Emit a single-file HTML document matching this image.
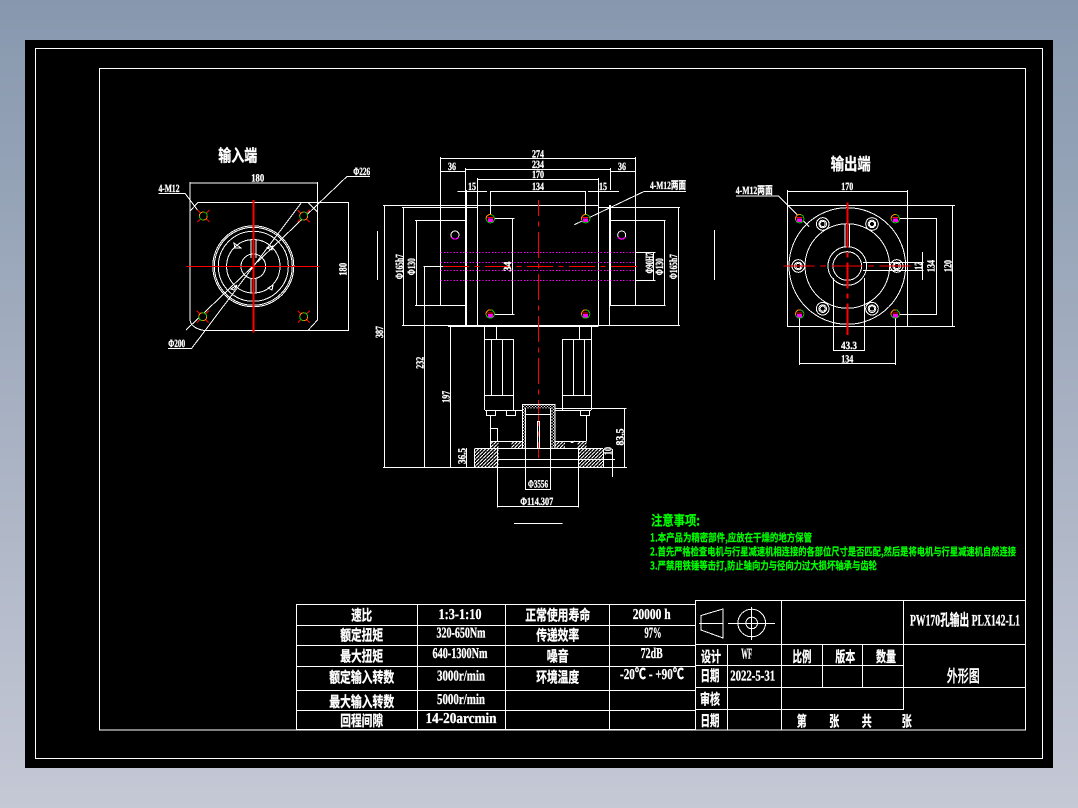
<!DOCTYPE html>
<html><head><meta charset="utf-8"><title>PW170</title>
<style>
html,body{margin:0;padding:0;width:1078px;height:808px;overflow:hidden;background:linear-gradient(#8798ae,#c5c8d5)}
svg{position:absolute;left:0;top:0;display:block;shape-rendering:crispEdges}
text{fill:#fff;stroke:#fff;stroke-width:.3px;font-family:"Liberation Serif","Noto Sans CJK SC",serif;font-size:11px;text-anchor:middle;dominant-baseline:central;text-rendering:geometricPrecision}
.w{stroke:#fff;stroke-width:1;fill:none}
.r{stroke:#f00;stroke-width:1.2;fill:none}
.rv{stroke:#f00;stroke-width:2;fill:none}
.c{font-family:"Noto Sans CJK SC","WenQuanYi Zen Hei",sans-serif;font-size:15px;font-weight:700}
.m{font-size:15px;font-weight:700}
.d{font-size:11px;font-weight:700}
.g{fill:#0f0;stroke:#0f0;stroke-width:.2px;font-family:"Noto Sans CJK SC","WenQuanYi Zen Hei",sans-serif;font-size:11px;font-weight:700;text-anchor:start}
</style></head><body>
<svg width="1078" height="808" viewBox="0 0 1078 808" xmlns="http://www.w3.org/2000/svg">
<defs>
<pattern id="hatch" width="3.5" height="3.5" patternUnits="userSpaceOnUse"><path d="M0 3.5L3.5 0" stroke="#fff" stroke-width="1.2"/></pattern>
<pattern id="cross" width="3" height="3" patternUnits="userSpaceOnUse"><path d="M0 0L3 3M0 3L3 0" stroke="#fff" stroke-width=".9"/></pattern>
<g id="h1"><path d="M-6-6L6 6M-6 6L6-6" stroke="#f00" fill="none"/><circle r="4" fill="#000" stroke="#0c0"/><path d="M-4 0A4 4 0 0 1 0-4" stroke="#f80" fill="none"/><path d="M4 0A4 4 0 0 1 0 4" stroke="#f80" fill="none"/></g>
<g id="h2"><circle r="4.2" fill="#000" stroke="#0c0"/><path d="M-4 1A4 4 0 0 1 1-4" stroke="#f80" fill="none"/><path d="M-3-1H3" stroke="#f00"/><rect x="-2.5" y="0" width="5" height="3.5" fill="#f0f"/></g>
<g id="h3"><circle r="4" fill="#000" stroke="#fff"/><path d="M-3.5 2A4 4 0 0 0 3.5 2" stroke="#f0f" fill="none" stroke-width="1.4"/></g>
<g id="b"><circle r="6.3" class="w"/><circle r="3.8" class="w"/><circle r="2.6" class="w"/></g>
</defs>

<rect x="25" y="40" width="1028" height="728" fill="#000"/>
<rect x="35.5" y="48.5" width="1007" height="710" class="w"/>
<rect x="99.5" y="68.5" width="926" height="661.5" class="w"/>

<!-- LEFT VIEW -->
<path class="w" d="M190 182V320Q191 328 204 330.5H348.5V202.5H198L190 211M317.5 182V320L308 330.5M308 202.5L317.5 212M189.5 183H317.5M348.5 202V331"/>
<circle cx="253.3" cy="266.3" r="40.5" class="w"/><circle cx="253.3" cy="266.3" r="39" class="w"/><circle cx="253.3" cy="266.3" r="35" class="w"/><circle cx="253.3" cy="266.3" r="26.7" class="w"/><circle cx="253.3" cy="266.3" r="12.3" class="w"/>
<path class="w" d="M251 240V258M256 240V258M251 278V293M256 278V293M234 243L235 248H241ZM273 246L272 250L267 248ZM231 289L237 285L234 290ZM272 290L273 285L268 288Z"/>
<path class="w" d="M186 330L346.7 176.7H370M168 348.3H191.7L301.7 202.3M158.3 193.3H185L197.5 210"/>
<path class="r" d="M186 266.5H319"/>
<path class="rv" d="M253.5 200V332.7"/>
<use href="#h1" x="203.3" y="216"/><use href="#h1" x="303.7" y="216"/><use href="#h1" x="202.7" y="316.7"/><use href="#h1" x="303.7" y="316.7"/>

<!-- MAIN TOP -->
<path class="w" d="M440.5 157V305M635.5 157V305M440.5 158.5H635.5M465.5 168V190M610.5 168V190M465.5 169.5H610.5M440.5 171.5H465.5M610.5 171.5H635.5M477.5 178V190M598.5 178V190M477.5 179.5H598.5M490.5 191.5H585.5M457.5 191.5H487M588 191.5H619M490.5 191V219M585.5 191V219"/>
<path class="w" d="M465.5 190V325M466.5 190V325M477.5 190V326M598.5 190V326M609.5 205V325M610.5 205V305M383 205.5H598.5M402 207.5H477.5M598.5 207.5H680M403.5 207V325M678.5 207V325M402 325.5H680M448 326.5H598.5M415 220.5H465.5M416.5 220V305M415 305.5H465.5M610.5 220.5H665.5M664.5 220V305M610 305.5H665.5M423.5 266.5H443M424.5 266V467.5M384.5 205V467.5M450.5 326V467.5M495 218.5H514.5M512.5 218V314M495 314.5H514.5M635.5 252.5H655.5M635.5 280.5H655.5M653.5 252V280M377.5 231V280M714.5 230V280"/>
<path class="w" d="M574.3 224.7L644 191.5H686"/>
<path d="M440.7 252.5H635.7M440.7 262.5H635.7M440.7 270.5H635.7M440.7 280.5H635.7" stroke="#f0f" stroke-width="1" stroke-dasharray="1.4 1.8" fill="none"/>
<path class="r" d="M443 266.5H638" stroke-dasharray="26 5.5 5 5.5"/>
<path class="r" d="M538.5 200V458" stroke-dasharray="26 5.5 5 5.5" stroke-dashoffset="10"/>
<use href="#h2" x="490.3" y="218.7"/><use href="#h2" x="585.7" y="218.7"/><use href="#h2" x="490.3" y="314"/><use href="#h2" x="585.7" y="314"/>
<use href="#h3" x="455" y="235"/><use href="#h3" x="621.7" y="235"/>

<!-- MAIN BOTTOM -->
<rect x="474.5" y="449" width="24" height="18" fill="url(#hatch)"/>
<rect x="578" y="449" width="25" height="18" fill="url(#hatch)"/>
<rect x="490.5" y="441" width="8" height="7.5" fill="url(#hatch)"/>
<rect x="511.5" y="441" width="10.5" height="7.5" fill="url(#hatch)"/>
<rect x="555" y="441" width="10" height="7.5" fill="url(#hatch)"/>
<rect x="577.5" y="441" width="9" height="8" fill="url(#hatch)"/>
<rect x="522.5" y="404.5" width="32.5" height="4" fill="url(#cross)"/>
<rect x="522.5" y="408" width="3" height="40.5" fill="url(#cross)"/>
<rect x="550.5" y="408" width="4.5" height="40.5" fill="url(#cross)"/>
<path class="w" d="M484.5 326V410M496.5 326V339M579.5 326V339M591.5 326V410M484.5 339.5H513.5M513.5 339V410M491.5 339V395M502.5 339V395M562.5 339.5H591.5M562.5 339V410M573.5 339V395M584.5 339V395M484.5 395.5H513.5M562.5 395.5H591.5M485 410.5H522.5M555 408.5H626.5M555 410.5H591M486.5 410V415.5H495.5V410M506.5 410V415.5H515.5V410M580.5 410V415.5H589.5V410M490.5 415V449M586.5 415V441M490.5 428.5H497.5V441M490.5 441.5H522.5M555 441.5H586.5M474.5 448.5H603M474.5 449V467M497.5 448V507.5M578.5 449V507.5M603.5 449V467M497.5 459.5H615M383 467.5H627M497 506.5H578.5M522.5 404.5H555M522.5 404V448M555 404V448M525.5 408V489M550.5 408V489M525.5 414.5H550.5M525 489.5H551M537.5 421V448M539.5 421V448M537.5 421.5H539.5M612.5 449V477M624.5 408V468M466.5 448V467M514 523.5H562.7M570 441Q572 444 575 441"/>

<!-- RIGHT VIEW -->
<path class="w" d="M787.5 190V326.5M907.5 190V326.5M787 205.5H955M787 326.5H955M952.5 205V327M787.5 191.5H907.5M736 196H778.7L809.3 226.7M900 218.5H937M900 314.5H937M936.5 218V315M799.5 314V365M895.5 314V365M799.5 363.5H895.5M833.5 278V351M864.5 278V351M833.5 350.5H864.5M863 262.5H923.5M863 270.5H923.5M922.5 252V280M845 224V247M849.5 224V247"/>
<circle cx="847.3" cy="266" r="58.3" class="w"/><circle cx="847.3" cy="266" r="42.3" class="w"/><circle cx="847.3" cy="266" r="19.3" class="w"/><circle cx="847.3" cy="266" r="14.3" class="w"/>
<use href="#b" x="798.3" y="266"/><use href="#b" x="822.7" y="224"/><use href="#b" x="872" y="224"/><use href="#b" x="896.7" y="266"/><use href="#b" x="822.7" y="308.7"/><use href="#b" x="872" y="308.7"/>
<path class="r" d="M783.3 266H913" stroke-dasharray="31 5.5 6 5.5"/>
<path class="rv" d="M847.5 202.3V335" stroke-dasharray="45 5 5 5 26 5 5 5 40"/>
<use href="#h2" x="799.7" y="218.7"/><use href="#h2" x="895.3" y="218.7"/><use href="#h2" x="799.7" y="314"/><use href="#h2" x="895.3" y="314"/>

<!-- TABLES -->
<path class="w" d="M296.5 605V730M417.5 605V730M505.5 605V730M609.5 605V730M296 604.5H695M296 625.5H695M296 645.5H695M296 666.5H695M296 690.5H695M296 710.5H695M296 729.5H695"/>
<path class="w" d="M695.5 600V730M695 600.5H1025.5M695 644.5H1025.5M695 665.5H903.5M695 687.5H1025.5M695 709.5H903.5M727.5 644V730M781.5 600V730M903.5 600V710M822.5 644V687M862.5 644V687"/>
<path class="w" d="M701 615.5L723 609V638L701 630ZM699 623.5H723M728 623.5H775M751.5 607V640"/>
<circle cx="751.7" cy="623" r="13.8" class="w"/><circle cx="751.7" cy="623" r="5.8" class="w"/>

<!-- TEXT -->
<text class="c" x="237.7" y="154" textLength="39" lengthAdjust="spacingAndGlyphs" style="font-size:17px">输入端</text>
<text class="c" x="850.7" y="162.3" textLength="40" lengthAdjust="spacingAndGlyphs" style="font-size:17px">输出端</text>
<text class="d" x="257.7" y="178.5" textLength="13" lengthAdjust="spacingAndGlyphs">180</text>
<text class="d" x="169" y="189" textLength="21" lengthAdjust="spacingAndGlyphs">4-M12</text>
<text class="d" x="361.7" y="172" textLength="17" lengthAdjust="spacingAndGlyphs">Φ226</text>
<text class="d" x="176.7" y="344" textLength="17" lengthAdjust="spacingAndGlyphs">Φ200</text>
<text class="d" transform="translate(343.3 269.3) rotate(-90)" textLength="13" lengthAdjust="spacingAndGlyphs">180</text>

<text class="d" x="538" y="154.5" textLength="12" lengthAdjust="spacingAndGlyphs">274</text>
<text class="d" x="538" y="165" textLength="12" lengthAdjust="spacingAndGlyphs">234</text>
<text class="d" x="538" y="175" textLength="12" lengthAdjust="spacingAndGlyphs">170</text>
<text class="d" x="538" y="187" textLength="12" lengthAdjust="spacingAndGlyphs">134</text>
<text class="d" x="452" y="167" textLength="8" lengthAdjust="spacingAndGlyphs">36</text>
<text class="d" x="622" y="167" textLength="8" lengthAdjust="spacingAndGlyphs">36</text>
<text class="d" x="472" y="187" textLength="8" lengthAdjust="spacingAndGlyphs">15</text>
<text class="d" x="603" y="187" textLength="8" lengthAdjust="spacingAndGlyphs">15</text>
<text class="d" x="668" y="186" textLength="36" lengthAdjust="spacingAndGlyphs">4-M12两面</text>
<text class="d" transform="translate(400 266.7) rotate(-90)" textLength="25" lengthAdjust="spacingAndGlyphs">Φ165h7</text>
<text class="d" transform="translate(412 266.7) rotate(-90)" textLength="17" lengthAdjust="spacingAndGlyphs">Φ130</text>
<text class="d" transform="translate(508 266.5) rotate(-90)" textLength="10" lengthAdjust="spacingAndGlyphs">34</text>
<text class="d" transform="translate(650 263) rotate(-90)" textLength="21" lengthAdjust="spacingAndGlyphs">Φ90H7</text>
<text class="d" transform="translate(660 266.7) rotate(-90)" textLength="17" lengthAdjust="spacingAndGlyphs">Φ130</text>
<text class="d" transform="translate(674 266.7) rotate(-90)" textLength="25" lengthAdjust="spacingAndGlyphs">Φ165h7</text>
<text class="d" transform="translate(380 332) rotate(-90)" textLength="12" lengthAdjust="spacingAndGlyphs">387</text>
<text class="d" transform="translate(420.7 362.7) rotate(-90)" textLength="12" lengthAdjust="spacingAndGlyphs">232</text>
<text class="d" transform="translate(446.7 396.7) rotate(-90)" textLength="12" lengthAdjust="spacingAndGlyphs">197</text>
<text class="d" transform="translate(462.3 456) rotate(-90)" textLength="16" lengthAdjust="spacingAndGlyphs">36.5</text>
<text class="d" transform="translate(608.7 451) rotate(-90)" textLength="8" lengthAdjust="spacingAndGlyphs">10</text>
<text class="d" transform="translate(620.7 437) rotate(-90)" textLength="17" lengthAdjust="spacingAndGlyphs">83.5</text>
<text class="d" x="538" y="484.3" textLength="20" lengthAdjust="spacingAndGlyphs">Φ3556</text>
<text class="d" x="536.7" y="502" textLength="33" lengthAdjust="spacingAndGlyphs">Φ114.307</text>

<text class="d" x="847.3" y="187" textLength="12" lengthAdjust="spacingAndGlyphs">170</text>
<text class="d" x="754.3" y="191" textLength="37" lengthAdjust="spacingAndGlyphs">4-M12两面</text>
<text class="d" x="847.3" y="359.5" textLength="12" lengthAdjust="spacingAndGlyphs">134</text>
<text class="d" x="849" y="346" textLength="16" lengthAdjust="spacingAndGlyphs">43.3</text>
<text class="d" transform="translate(919 265.7) rotate(-90)" textLength="8" lengthAdjust="spacingAndGlyphs">12</text>
<text class="d" transform="translate(931.7 266) rotate(-90)" textLength="12" lengthAdjust="spacingAndGlyphs">134</text>
<text class="d" transform="translate(948.7 266) rotate(-90)" textLength="12" lengthAdjust="spacingAndGlyphs">120</text>

<text class="g" x="651" y="520.5" textLength="49" lengthAdjust="spacingAndGlyphs" style="font-size:14px">注意事项:</text>
<text class="g" x="650" y="537.5" textLength="162" lengthAdjust="spacingAndGlyphs">1.本产品为精密部件,应放在干燥的地方保管</text>
<text class="g" x="650" y="551.7" textLength="366" lengthAdjust="spacingAndGlyphs">2.首先严格检查电机与行星减速机相连接的各部位尺寸是否匹配,然后是将电机与行星减速机自然连接</text>
<text class="g" x="650" y="565.7" textLength="227" lengthAdjust="spacingAndGlyphs">3.严禁用铁锤等击打,防止轴向力与径向力过大损坏轴承与齿轮</text>

<text class="c" x="361.7" y="615" textLength="21" lengthAdjust="spacingAndGlyphs">速比</text>
<text class="c" x="361.7" y="635" textLength="43" lengthAdjust="spacingAndGlyphs">额定扭矩</text>
<text class="c" x="361.7" y="656" textLength="43" lengthAdjust="spacingAndGlyphs">最大扭矩</text>
<text class="c" x="361.7" y="677" textLength="65" lengthAdjust="spacingAndGlyphs">额定输入转数</text>
<text class="c" x="361.7" y="701.5" textLength="65" lengthAdjust="spacingAndGlyphs">最大输入转数</text>
<text class="c" x="361.7" y="720.7" textLength="43" lengthAdjust="spacingAndGlyphs">回程间隙</text>
<text class="m" x="460" y="615" textLength="43" lengthAdjust="spacingAndGlyphs">1:3-1:10</text>
<text class="m" x="461" y="633.5" textLength="49" lengthAdjust="spacingAndGlyphs">320-650Nm</text>
<text class="m" x="460" y="654" textLength="55" lengthAdjust="spacingAndGlyphs">640-1300Nm</text>
<text class="m" x="461" y="676.5" textLength="48" lengthAdjust="spacingAndGlyphs">3000r/min</text>
<text class="m" x="461" y="700" textLength="48" lengthAdjust="spacingAndGlyphs">5000r/min</text>
<text class="m" x="461" y="719" textLength="71" lengthAdjust="spacingAndGlyphs">14-20arcmin</text>
<text class="c" x="557.7" y="615" textLength="65" lengthAdjust="spacingAndGlyphs">正常使用寿命</text>
<text class="c" x="557.7" y="635" textLength="43" lengthAdjust="spacingAndGlyphs">传递效率</text>
<text class="c" x="557.7" y="656" textLength="22" lengthAdjust="spacingAndGlyphs">噪音</text>
<text class="c" x="557.7" y="677" textLength="43" lengthAdjust="spacingAndGlyphs">环境温度</text>
<text class="m" x="651.7" y="615" textLength="38" lengthAdjust="spacingAndGlyphs">20000 h</text>
<text class="m" x="653" y="633.5" textLength="17" lengthAdjust="spacingAndGlyphs">97%</text>
<text class="m" x="651.7" y="654" textLength="22" lengthAdjust="spacingAndGlyphs">72dB</text>
<text class="m" x="652" y="675" textLength="64" lengthAdjust="spacingAndGlyphs">-20℃ - +90℃</text>

<text class="m" x="965" y="621" textLength="110" lengthAdjust="spacingAndGlyphs" style="font-size:16px">PW170孔输出 PLX142-L1</text>
<text class="c" x="711" y="656.7" textLength="20" lengthAdjust="spacingAndGlyphs">设计</text>
<text class="m" x="746.7" y="654.5" textLength="11" lengthAdjust="spacingAndGlyphs">WF</text>
<text class="c" x="802" y="656.7" textLength="19" lengthAdjust="spacingAndGlyphs">比例</text>
<text class="c" x="845.3" y="656.7" textLength="20" lengthAdjust="spacingAndGlyphs">版本</text>
<text class="c" x="886" y="656.7" textLength="20" lengthAdjust="spacingAndGlyphs">数量</text>
<text class="c" x="710" y="675.7" textLength="19" lengthAdjust="spacingAndGlyphs">日期</text>
<text class="m" x="752.7" y="676.7" textLength="45" lengthAdjust="spacingAndGlyphs">2022-5-31</text>
<text class="c" x="963.3" y="674.3" textLength="33" lengthAdjust="spacingAndGlyphs" style="font-size:17px;font-weight:500">外形图</text>
<text class="c" x="710" y="699" textLength="20" lengthAdjust="spacingAndGlyphs">审核</text>
<text class="c" x="710" y="720.7" textLength="19" lengthAdjust="spacingAndGlyphs">日期</text>
<text class="c" x="801.7" y="721" textLength="10" lengthAdjust="spacingAndGlyphs">第</text>
<text class="c" x="834.3" y="721" textLength="10" lengthAdjust="spacingAndGlyphs">张</text>
<text class="c" x="866.7" y="721" textLength="10" lengthAdjust="spacingAndGlyphs">共</text>
<text class="c" x="906.7" y="721" textLength="10" lengthAdjust="spacingAndGlyphs">张</text>
</svg>
</body></html>
